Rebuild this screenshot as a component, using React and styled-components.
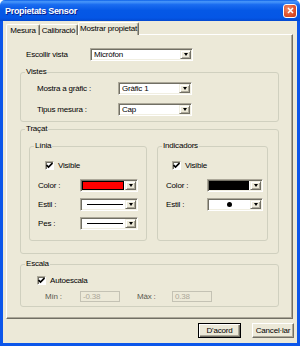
import React from "react";
import styled, { createGlobalStyle } from "styled-components";

const GlobalStyle = createGlobalStyle`
    *, *::before, *::after {
        box-sizing: border-box;
    }
    html, body {
        margin: 0;
        padding: 0;
        background: #ffffff;
    }
    body {
        font-family: "Liberation Sans Narrow", "Liberation Sans", Arial, sans-serif;
        font-size: 8px;
        letter-spacing: -0.2px;
        color: #000000;
    }
`;

const Window = styled.div`
    width: 300px;
    height: 346px;
    display: flex;
    flex-direction: column;
    overflow: hidden;
`;

const TitleBar = styled.div`
    height: 21px;
    flex: none;
    display: flex;
    align-items: center;
    justify-content: space-between;
    padding: 0 5px 0 5px;
    border-radius: 5px 5px 0 0;
    background: linear-gradient(
        #0a5fe8 0%,
        #4a98fa 8%,
        #1a6cf0 22%,
        #0558e6 50%,
        #0456e6 85%,
        #0348d0 100%
    );
`;

const TitleText = styled.span`
    color: #ffffff;
    font-weight: bold;
    font-size: 9px;
    letter-spacing: -0.3px;
    text-shadow: 1px 1px 0 #0a1e8c;
`;

const CloseButton = styled.div`
    width: 14px;
    height: 14px;
    border: 1px solid #ffffff;
    border-radius: 3px;
    background: radial-gradient(circle at 35% 30%, #f08b6a, #e2542e 55%, #c43a16);
    display: flex;
    align-items: center;
    justify-content: center;
    margin-right: -2px;
`;

const Frame = styled.div`
    flex: 1;
    display: flex;
    flex-direction: column;
    background: #ece9d8;
    border: 3px solid #0c56ea;
    border-top: none;
    padding-top: 1px;
`;

const TabRow = styled.div`
    display: flex;
    align-items: flex-end;
    height: 13px;
    margin: 0 0 -1px 3px;
    position: relative;
    z-index: 1;
`;

const Tab = styled.div`
    height: ${({ active }) => (active ? "13px" : "11px")};
    width: ${({ w }) => w}px;
    margin: ${({ active }) => (active ? "0 -2px 0 0" : "0")};
    display: flex;
    align-items: center;
    justify-content: center;
    background: #ece9d8;
    border-top: 1px solid #ffffff;
    border-left: ${({ first, active }) => (first || active ? "1px solid #ffffff" : "none")};
    border-right: 1px solid #716f64;
    box-shadow: inset -1px 0 #aca899;
    border-radius: 2px 2px 0 0;
    padding-bottom: ${({ active }) => (active ? "1px" : "0")};
    white-space: nowrap;
`;

const Panel = styled.div`
    height: 285px;
    flex: none;
    margin: 0 4px 0 3px;
    border: 1px solid;
    border-color: #ffffff #716f64 #716f64 #ffffff;
    box-shadow: inset -1px -1px #aca899;
    padding: 12px 13px 0 13px;
    display: flex;
    flex-direction: column;
`;

const Row = styled.div`
    display: flex;
    align-items: center;
    flex: none;
    height: ${({ h }) => h || 13}px;
    padding-left: ${({ indent }) => indent || 0}px;
    margin-top: ${({ mt }) => mt || 0}px;
`;

const Label = styled.span`
    width: ${({ w }) => w}px;
    flex: none;
    color: ${({ disabled }) => (disabled ? "#5a5950" : "#000000")};
    white-space: nowrap;
`;

const Group = styled.div`
    position: relative;
    height: ${({ h }) => h}px;
    width: ${({ w }) => (w ? `${w}px` : "auto")};
    margin-top: ${({ mt }) => mt || 0}px;
    border: 1px solid #d0d0bf;
    border-radius: 3px;
    padding: ${({ pad }) => pad};
    display: flex;
    flex-direction: column;
    flex: none;
`;

const Legend = styled.span`
    position: absolute;
    top: -6px;
    left: 4px;
    padding: 0 1px;
    background: #ece9d8;
    line-height: 10px;
`;

const SubGroups = styled.div`
    display: flex;
    gap: 10px;
`;

const Combo = styled.div`
    width: ${({ w }) => w}px;
    height: 13px;
    flex: none;
    display: flex;
    background: #ffffff;
    border: 1px solid;
    border-color: #aca899 #ffffff #ffffff #aca899;
    box-shadow: inset 1px 1px #716f64, inset -1px -1px #f1efe2;
    padding: 1px;
`;

const ComboValue = styled.div`
    flex: 1;
    display: flex;
    align-items: center;
    justify-content: ${({ center }) => (center ? "center" : "flex-start")};
    padding: ${({ swatch }) => (swatch ? "0 1px 0 0" : "0 2px")};
    overflow: hidden;
    white-space: nowrap;
`;

const Swatch = styled.div`
    flex: 1;
    align-self: stretch;
    background: ${({ color }) => color};
    border: 1px solid #000000;
`;

const LineSample = styled.div`
    width: ${({ w }) => w}px;
    height: 1px;
    background: #000000;
    margin-left: 3px;
`;

const Dot = styled.div`
    width: 5px;
    height: 5px;
    border-radius: 50%;
    background: #000000;
`;

const DropButton = styled.div`
    width: 11px;
    flex: none;
    background: #ece9d8;
    border: 1px solid;
    border-color: #f1efe2 #716f64 #716f64 #f1efe2;
    box-shadow: inset 1px 1px #ffffff, inset -1px -1px #aca899;
    display: flex;
    align-items: center;
    justify-content: center;

    &::after {
        content: "";
        border-left: 2.5px solid transparent;
        border-right: 2.5px solid transparent;
        border-top: 3px solid #000000;
    }
`;

const CheckBox = styled.div`
    width: 9px;
    height: 9px;
    flex: none;
    background: #ffffff;
    border: 1px solid;
    border-color: #aca899 #ffffff #ffffff #aca899;
    box-shadow: inset 1px 1px #716f64;
    display: flex;
    align-items: center;
    justify-content: center;
    margin-right: 4px;
`;

const TextBox = styled.div`
    width: 40px;
    height: 11px;
    flex: none;
    border: 1px solid #c4c2b4;
    background: #ece9d8;
    color: #aca899;
    display: flex;
    align-items: center;
    padding-left: 2px;
`;

const Spacer = styled.div`
    width: ${({ w }) => w}px;
    flex: none;
`;

const ButtonRow = styled.div`
    display: flex;
    justify-content: flex-end;
    gap: 11px;
    margin: 4px 3px 0 0;
`;

const Button = styled.div`
    width: ${({ w }) => w}px;
    height: 15px;
    display: flex;
    align-items: center;
    justify-content: center;
    background: #ece9d8;
    border: 1px solid;
    border-color: ${({ primary }) =>
        primary ? "#000000" : "#ffffff #716f64 #716f64 #ffffff"};
    box-shadow: ${({ primary }) =>
        primary
            ? "inset 1px 1px #ffffff, inset -1px -1px #716f64, inset -2px -2px #aca899"
            : "inset -1px -1px #aca899"};
`;

function Check() {
    return (
        <svg width="7" height="7" viewBox="0 0 7 7">
            <path d="M0.5 3 L2.5 5 L6.5 1" stroke="#000" strokeWidth="1.7" fill="none" />
        </svg>
    );
}

function Select({ w, children, center, swatch }) {
    return (
        <Combo w={w}>
            <ComboValue center={center} swatch={swatch}>{children}</ComboValue>
            <DropButton />
        </Combo>
    );
}

export default function App() {
    return (
        <>
            <GlobalStyle />
            <Window>
                <TitleBar>
                    <TitleText>Propietats Sensor</TitleText>
                    <CloseButton>
                        <svg width="7" height="7" viewBox="0 0 7 7">
                            <path d="M1 1 L6 6 M6 1 L1 6" stroke="#fff" strokeWidth="1.5" />
                        </svg>
                    </CloseButton>
                </TitleBar>
                <Frame>
                    <TabRow>
                        <Tab w={34} first>Mesura</Tab>
                        <Tab w={38}>Calibració</Tab>
                        <Tab w={61} active>Mostrar propietat</Tab>
                    </TabRow>
                    <Panel>
                        <Row h={14} indent={6}>
                            <Label w={64}>Escollir vista</Label>
                            <Select w={103}>Micròfon</Select>
                        </Row>

                        <Group h={50} mt={11} pad="9px 0 0 16px">
                            <Legend>Vistes</Legend>
                            <Row>
                                <Label w={81}>Mostra a gràfic :</Label>
                                <Select w={74}>Gràfic 1</Select>
                            </Row>
                            <Row mt={8}>
                                <Label w={81}>Tipus mesura :</Label>
                                <Select w={74}>Cap</Select>
                            </Row>
                        </Group>

                        <Group h={125} mt={7} pad="16px 0 0 8px">
                            <Legend>Traçat</Legend>
                            <SubGroups>
                                <Group h={95} w={118} pad="13px 0 0 8px">
                                    <Legend>Línia</Legend>
                                    <Row h={10} indent={7}>
                                        <CheckBox><Check /></CheckBox>
                                        Visible
                                    </Row>
                                    <Row mt={9}>
                                        <Label w={42}>Color :</Label>
                                        <Select w={58} swatch>
                                            <Swatch color="#ff0000" />
                                        </Select>
                                    </Row>
                                    <Row mt={6}>
                                        <Label w={42}>Estil :</Label>
                                        <Select w={58}>
                                            <LineSample w={38} />
                                        </Select>
                                    </Row>
                                    <Row mt={6}>
                                        <Label w={42}>Pes :</Label>
                                        <Select w={58}>
                                            <LineSample w={38} />
                                        </Select>
                                    </Row>
                                </Group>
                                <Group h={95} w={111} pad="13px 0 0 8px">
                                    <Legend>Indicadors</Legend>
                                    <Row h={10} indent={6}>
                                        <CheckBox><Check /></CheckBox>
                                        Visible
                                    </Row>
                                    <Row mt={9}>
                                        <Label w={41}>Color :</Label>
                                        <Select w={56} swatch>
                                            <Swatch color="#000000" />
                                        </Select>
                                    </Row>
                                    <Row mt={6}>
                                        <Label w={41}>Estil :</Label>
                                        <Select w={56} center>
                                            <Dot />
                                        </Select>
                                    </Row>
                                </Group>
                            </SubGroups>
                        </Group>

                        <Group h={43} mt={10} pad="11px 0 0 16px">
                            <Legend>Escala</Legend>
                            <Row h={9}>
                                <CheckBox><Check /></CheckBox>
                                Autoescala
                            </Row>
                            <Row h={11} mt={6} indent={8}>
                                <Label w={35} disabled>Mín :</Label>
                                <TextBox>-0.38</TextBox>
                                <Spacer w={17} />
                                <Label w={35} disabled>Màx :</Label>
                                <TextBox>0.38</TextBox>
                            </Row>
                        </Group>
                    </Panel>
                    <ButtonRow>
                        <Button w={43} primary>D'acord</Button>
                        <Button w={42}>Cancel·lar</Button>
                    </ButtonRow>
                </Frame>
            </Window>
        </>
    );
}
